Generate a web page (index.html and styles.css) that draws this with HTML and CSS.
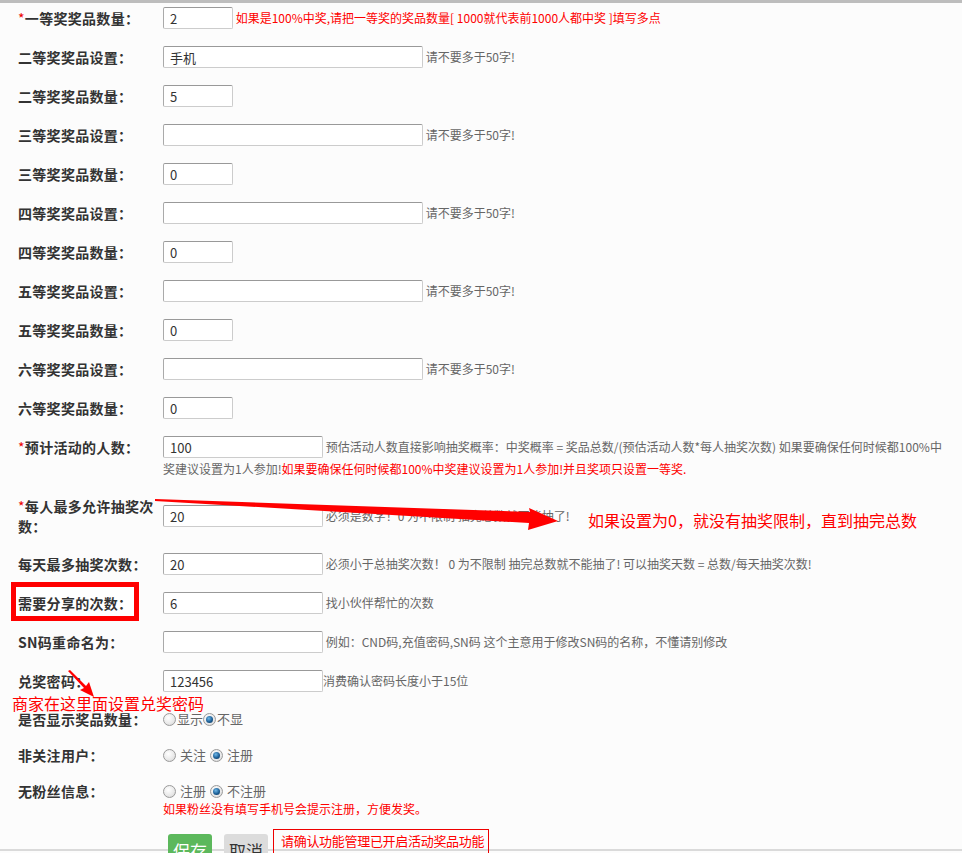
FILE: index.html
```html
<!DOCTYPE html>
<html lang="zh-CN">
<head>
<meta charset="utf-8">
<title>奖品设置</title>
<link rel="stylesheet" href="styles.css">
</head>
<body>
<div class="topbar"></div>
<div class="page">
  <div class="row">
    <div class="label"><span class="req">*</span>一等奖奖品数量：</div>
    <div class="field"><input class="inp sm" value="2"> <span class="help red">如果是100%中奖,请把一等奖的奖品数量[ 1000就代表前1000人都中奖 ]填写多点</span></div>
  </div>
  <div class="row">
    <div class="label">二等奖奖品设置：</div>
    <div class="field"><input class="inp lg" value="手机"> <span class="help">请不要多于50字!</span></div>
  </div>
  <div class="row">
    <div class="label">二等奖奖品数量：</div>
    <div class="field"><input class="inp sm" value="5"></div>
  </div>
  <div class="row">
    <div class="label">三等奖奖品设置：</div>
    <div class="field"><input class="inp lg" value=""> <span class="help">请不要多于50字!</span></div>
  </div>
  <div class="row">
    <div class="label">三等奖奖品数量：</div>
    <div class="field"><input class="inp sm" value="0"></div>
  </div>
  <div class="row">
    <div class="label">四等奖奖品设置：</div>
    <div class="field"><input class="inp lg" value=""> <span class="help">请不要多于50字!</span></div>
  </div>
  <div class="row">
    <div class="label">四等奖奖品数量：</div>
    <div class="field"><input class="inp sm" value="0"></div>
  </div>
  <div class="row">
    <div class="label">五等奖奖品设置：</div>
    <div class="field"><input class="inp lg" value=""> <span class="help">请不要多于50字!</span></div>
  </div>
  <div class="row">
    <div class="label">五等奖奖品数量：</div>
    <div class="field"><input class="inp sm" value="0"></div>
  </div>
  <div class="row">
    <div class="label">六等奖奖品设置：</div>
    <div class="field"><input class="inp lg" value=""> <span class="help">请不要多于50字!</span></div>
  </div>
  <div class="row">
    <div class="label">六等奖奖品数量：</div>
    <div class="field"><input class="inp sm" value="0"></div>
  </div>
  <div class="row row-gap1">
    <div class="label"><span class="req">*</span>预计活动的人数：</div>
    <div class="field multi"><input class="inp md" value="100"> <span class="help">预估活动人数直接影响抽奖概率：中奖概率 = 奖品总数/(预估活动人数*每人抽奖次数) 如果要确保任何时候都100%中奖建议设置为1人参加!<span class="red">如果要确保任何时候都100%中奖建议设置为1人参加!并且奖项只设置一等奖.</span></span></div>
  </div>
  <div class="row row-center">
    <div class="label"><span class="req">*</span>每人最多允许抽奖次数：</div>
    <div class="field"><input class="inp md" value="20"> <span class="help">必须是数字！0 为不限制 抽完总数就不能抽了!</span></div>
  </div>
  <div class="row">
    <div class="label">每天最多抽奖次数：</div>
    <div class="field"><input class="inp md" value="20"> <span class="help">必须小于总抽奖次数！ 0 为不限制 抽完总数就不能抽了! 可以抽奖天数 = 总数/每天抽奖次数!</span></div>
  </div>
  <div class="row boxed">
    <span class="mark-box"></span>
    <div class="label">需要分享的次数：</div>
    <div class="field"><input class="inp md" value="6"> <span class="help">找小伙伴帮忙的次数</span></div>
  </div>
  <div class="row">
    <div class="label">SN码重命名为：</div>
    <div class="field"><input class="inp md" value=""> <span class="help">例如：CND码,充值密码,SN码 这个主意用于修改SN码的名称，不懂请别修改</span></div>
  </div>
  <div class="row">
    <div class="label">兑奖密码：</div>
    <div class="field"><input class="inp md" value="123456"><span class="help">消费确认密码长度小于15位</span></div>
  </div>
  <div class="row radio-row">
    <div class="label">是否显示奖品数量：</div>
    <div class="field radios tight"><span class="radio"></span>显示 <span class="radio on"></span>不显</div>
  </div>
  <div class="row radio-row">
    <div class="label">非关注用户：</div>
    <div class="field radios"><span class="radio"></span><span class="rtxt">关注</span><span class="radio on"></span><span class="rtxt">注册</span></div>
  </div>
  <div class="row radio-row last">
    <div class="label">无粉丝信息：</div>
    <div class="field radios">
      <div><span class="radio"></span><span class="rtxt">注册</span><span class="radio on"></span><span class="rtxt">不注册</span></div>
      <div class="note red">如果粉丝没有填写手机号会提示注册，方便发奖。</div>
    </div>
  </div>
  <div class="actions">
    <button class="btn btn-save">保存</button>
    <button class="btn btn-cancel">取消</button>
    <div class="notice">请确认功能管理已开启活动奖品功能</div>
  </div>
</div>

<svg class="overlay" width="962" height="853" viewBox="0 0 962 853">
  <polygon points="155,499 530,512 529,508 558,521 528,530 529,523 155,501" fill="#ff0000"/>
  <polygon points="68,671 70,670 86,686 89,682 94,697 80,690 84,688" fill="#ff0000"/>
</svg>
<div class="anno anno-1">如果设置为0，就没有抽奖限制，直到抽完总数</div>
<div class="anno anno-2">商家在这里面设置兑奖密码</div>
<div class="bottom-line"></div>
</body>
</html>
```

FILE: styles.css
```css
* { box-sizing: border-box; }
html, body {
  margin: 0;
  padding: 0;
  background: #fcfcfc;
}
body {
  position: relative;
  width: 962px;
  height: 853px;
  overflow: hidden;
  font-family: "Microsoft YaHei", "Noto Sans CJK SC", "Noto Sans", sans-serif;
  color: #333;
  font-size: 13px;
}
.topbar {
  height: 3px;
  background: #bdbdbd;
}
.page {
  padding: 4px 9px 0 18px;
}
.row {
  display: flex;
  align-items: flex-start;
  margin-bottom: 17px;
  position: relative;
}
.row-gap1 { margin-top: 1px; }
.row-center { align-items: center; }
.label {
  flex: 0 0 137px;
  margin-right: 8px;
  font-weight: bold;
  font-size: 14px;
  line-height: 22px;
  color: #333;
  position: relative;
  z-index: 1;
  letter-spacing: 0.3px;
}
.row-center .label { line-height: 20px; }
.req { color: #e00; font-weight: normal; }
.field {
  flex: 1;
  font-size: 12px;
  line-height: 22px;
  min-width: 0;
}
.inp {
  height: 22px;
  border: 1px solid #ccc;
  border-top-color: #999;
  border-left-color: #aaa;
  border-radius: 2px;
  background: #fff;
  padding: 0 6px;
  font-family: inherit;
  font-size: 13px;
  color: #333;
  vertical-align: top;
  margin: 0;
}
.sm { width: 70px; }
.md { width: 160px; }
.lg { width: 260px; }
.help { color: #666; }
.red { color: #ff0000; }
.multi { line-height: 21px; }

.mark-box {
  position: absolute;
  left: -7px;
  top: -10px;
  width: 128px;
  height: 39px;
  border: 5px solid #ff0000;
  background: #fff;
  z-index: 0;
}

.radio-row { margin-bottom: 16px; }
.radio-row.last { margin-bottom: 12px; }
.radio-row .label { line-height: 20px; }
.radios {
  font-size: 13px;
  color: #666;
  line-height: 20px;
  display: flex;
  align-items: center;
  flex-wrap: wrap;
}
.radios > div { width: 100%; }
.radios > div:first-child { display: flex; align-items: center; }
.radios.tight .radio { margin-right: 1px; }
.radios > .note { font-size: 12px; line-height: 16px; }
.radio {
  display: inline-block;
  width: 13px;
  height: 13px;
  border-radius: 50%;
  border: 1px solid #9a9a9a;
  background: radial-gradient(circle at 40% 35%, #fff 0%, #e8e8e8 60%, #cfcfcf 100%);
  position: relative;
  flex: 0 0 13px;
}
.radio.on::after {
  content: "";
  position: absolute;
  left: 2px;
  top: 2px;
  width: 7px;
  height: 7px;
  border-radius: 50%;
  background: radial-gradient(circle at 40% 35%, #6fb8e8 0%, #1d5f96 55%, #0b2f52 100%);
}
.rtxt { margin: 0 4px; }

.actions {
  display: flex;
  align-items: flex-start;
  padding-left: 150px;
  position: relative;
  z-index: 2;
}
.btn {
  height: 32px;
  border: 0;
  border-radius: 3px;
  font-family: inherit;
  font-size: 17px;
  padding: 0;
  width: 44px;
  margin-top: 5px;
}
.btn-save {
  background: #5cb85c;
  color: #fff;
}
.btn-cancel {
  background: #dcdcdc;
  color: #333;
  margin-left: 12px;
}
.notice {
  margin-left: 5px;
  border: 1px solid #e00;
  color: #ff0000;
  font-size: 13px;
  padding: 1px 0 0 7px;
  height: 40px;
  width: 216px;
  line-height: 20px;
  white-space: nowrap;
  letter-spacing: -0.3px;
}

.overlay {
  position: absolute;
  left: 0;
  top: 0;
  z-index: 5;
  pointer-events: none;
}
.anno {
  position: absolute;
  color: #ff0000;
  font-size: 16px;
  line-height: 20px;
  font-family: "Noto Sans CJK SC", sans-serif;
  z-index: 6;
  white-space: nowrap;
}
.anno-1 { left: 588px; top: 510px; }
.anno-2 { left: 12px; top: 693px; }
.bottom-line {
  position: absolute;
  left: 0;
  top: 849px;
  width: 962px;
  height: 2px;
  background: #dadada;
  z-index: 1;
}
```
